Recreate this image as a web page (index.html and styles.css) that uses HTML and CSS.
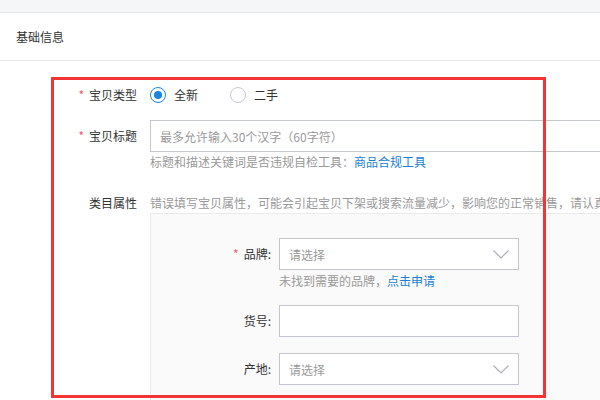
FILE: index.html
```html
<!DOCTYPE html>
<html lang="zh-CN">
<head>
    <meta charset="UTF-8">
    <title>基础信息</title>
    <link rel="stylesheet" href="styles.css">
</head>
<body>
    <div class="topbar"></div>
    <div class="section-title">基础信息</div>

    <div class="form">
        <div class="row row-type">
            <div class="label req">宝贝类型</div>
            <div class="radios">
                <span class="radio checked"></span><span class="radio-text">全新</span>
                <span class="radio"></span><span class="radio-text">二手</span>
            </div>
        </div>

        <div class="row row-title">
            <div class="label req">宝贝标题</div>
            <div class="control">
                <div class="input wide"><span class="placeholder">最多允许输入30个汉字（60字符）</span></div>
                <div class="help">标题和描述关键词是否违规自检工具：<a class="link">商品合规工具</a></div>
            </div>
        </div>

        <div class="row row-cat">
            <div class="label">类目属性</div>
            <div class="control">
                <div class="warn">错误填写宝贝属性，可能会引起宝贝下架或搜索流量减少，影响您的正常销售，请认真</div>
                <div class="attr-box">
                    <div class="attr-row brand">
                        <div class="attr-label req">品牌:</div>
                        <div class="attr-control">
                            <div class="input select">
                                <span class="placeholder">请选择</span>
                                <svg class="chevron" width="16" height="9" viewBox="0 0 16 9"><polyline points="0.5,0.5 8,8 15.5,0.5" fill="none" stroke="#a9aebc" stroke-width="1.2"/></svg>
                            </div>
                            <div class="help">未找到需要的品牌，<a class="link">点击申请</a></div>
                        </div>
                    </div>
                    <div class="attr-row">
                        <div class="attr-label">货号:</div>
                        <div class="attr-control">
                            <div class="input"></div>
                        </div>
                    </div>
                    <div class="attr-row">
                        <div class="attr-label">产地:</div>
                        <div class="attr-control">
                            <div class="input select">
                                <span class="placeholder">请选择</span>
                                <svg class="chevron" width="16" height="9" viewBox="0 0 16 9"><polyline points="0.5,0.5 8,8 15.5,0.5" fill="none" stroke="#a9aebc" stroke-width="1.2"/></svg>
                            </div>
                        </div>
                    </div>
                </div>
            </div>
        </div>
    </div>

    <div class="highlight"></div>
</body>
</html>
```

FILE: styles.css
```css
body
{
    margin: 0;
    width: 600px;
    height: 400px;
    overflow: hidden;
    position: relative;
    background: #fff;
    font-family: "Noto Sans CJK SC", "Noto Sans", sans-serif;
    font-size: 12px;
    color: #333;
}

.topbar
{
    height: 12px;
    background: #f5f6f8;
    border-bottom: 1px solid #e8e9eb;
}

.section-title
{
    height: 47px;
    line-height: 47px;
    padding-left: 16px;
    border-bottom: 1px solid #e8e8e8;
}

.form
{
    width: 600px;
    padding-top: 20px;
}

.row { display: flex; }

.label
{
    width: 137px;
    text-align: right;
    flex-shrink: 0;
    margin-right: 13px;
}

.req::before
{
    content: "*";
    color: #f5576c;
    margin-right: 5px;
}

.row-type { height: 28px; line-height: 28px; }

.radios { display: flex; align-items: center; }

.radio
{
    width: 16px;
    height: 16px;
    box-sizing: border-box;
    border: 1px solid #c7c9cf;
    border-radius: 50%;
    position: relative;
}

.radio.checked { border-color: #1a84e0; }

.radio.checked::after
{
    content: "";
    position: absolute;
    left: 3px;
    top: 3px;
    width: 8px;
    height: 8px;
    border-radius: 50%;
    background: #1a84e0;
}

.radio-text { margin: 0 32px 0 8px; }

.control { min-width: 0; overflow: hidden; }

.row-title { margin-top: 11px; }
.row-title .label { line-height: 32px; }

.input
{
    height: 32px;
    box-sizing: border-box;
    border: 1px solid #c4c6cf;
    background: #fff;
    display: flex;
    align-items: center;
    padding: 0 9px;
}

.input.wide { width: 520px; }

.placeholder { color: #9a9a9a; }

.select { justify-content: space-between; }

.help
{
    line-height: 20px;
    color: #999;
}

.link { color: #1b7fd6; }

.row-cat { margin-top: 21px; }
.row-cat .label { line-height: 20px; }

.warn
{
    line-height: 20px;
    color: #999;
    white-space: nowrap;
}

.attr-box
{
    width: 600px;
    background: #fafafa;
    border: 1px solid #ebebeb;
    padding: 24px 0 30px;
}

.attr-row
{
    display: flex;
    margin-bottom: 16px;
}

.attr-row.brand { margin-bottom: 13px; }

.attr-label
{
    width: 120px;
    text-align: right;
    line-height: 32px;
    margin-right: 8px;
    flex-shrink: 0;
}

.attr-control { width: 240px; }

.attr-control .help { line-height: 22px; }

.highlight
{
    position: absolute;
    left: 51px;
    top: 77px;
    width: 495px;
    height: 321px;
    box-sizing: border-box;
    border: 3px solid #f23434;
}
```
